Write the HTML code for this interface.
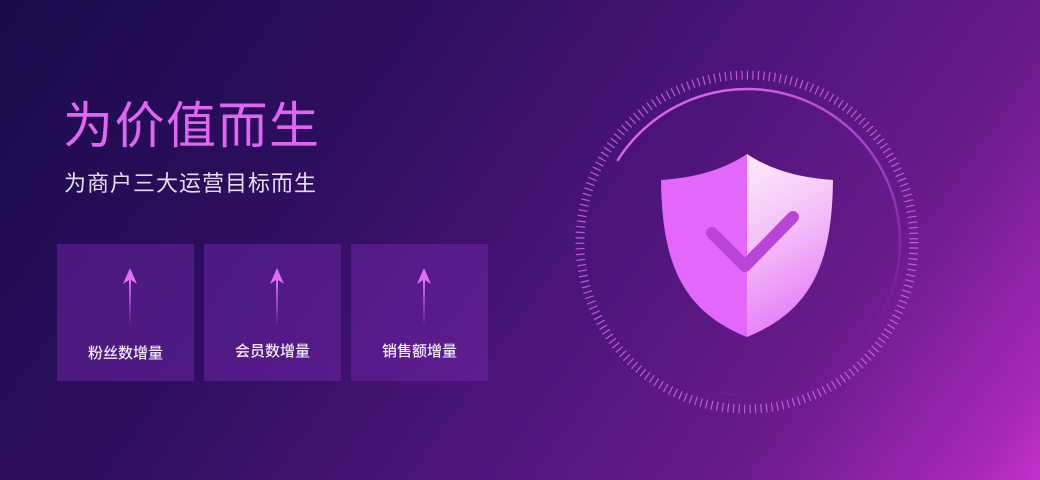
<!DOCTYPE html>
<html><head><meta charset="utf-8"><style>
html,body{margin:0;padding:0}
body{width:1040px;height:480px;overflow:hidden;position:relative;font-family:"Liberation Sans","Noto Sans CJK SC",sans-serif;
background:linear-gradient(125deg,#1c0a4b 0%,#2c0e5e 30%,#4a1478 55%,#6a1b8c 78%,#a728b8 95%,#c52fcb 100%);}
.t{position:absolute;left:63px;top:96px;font-size:50px;color:#e066f2;letter-spacing:1.5px;line-height:60px}
.s{position:absolute;left:64px;top:170px;font-size:22px;color:#e6def0;letter-spacing:1px;line-height:28px}
.b{position:absolute;top:244px;width:137px;height:137px;background:rgba(120,40,175,0.45)}
.b span{position:absolute;left:0;right:0;top:98px;text-align:center;color:#f2ecf6;font-size:15px;font-weight:500}
.b svg{position:absolute;left:65px;top:24px}
</style></head><body>
<div class="t">为价值而生</div>
<div class="s">为商户三大运营目标而生</div>
<div class="b" style="left:57px"><svg width="16" height="60"><path d="M8 0 L15 16 L9 12 L8 58 L7 12 L1 16 Z" fill="#e36cf8"/></svg><span>粉丝数增量</span></div>
<div class="b" style="left:204px"><svg width="16" height="60"><path d="M8 0 L15 16 L9 12 L8 58 L7 12 L1 16 Z" fill="#e36cf8"/></svg><span style="top:96px">会员数增量</span></div>
<div class="b" style="left:351px"><svg width="16" height="60"><path d="M8 0 L15 16 L9 12 L8 58 L7 12 L1 16 Z" fill="#e36cf8"/></svg><span style="top:96px">销售额增量</span></div>
<svg width="1040" height="480" style="position:absolute;left:0;top:0">
<defs>
<linearGradient id="arc" x1="620" y1="150" x2="760" y2="400" gradientUnits="userSpaceOnUse">
<stop offset="0" stop-color="#d762f0"/><stop offset="0.6" stop-color="#b04ad0" stop-opacity="0.6"/><stop offset="1" stop-color="#9a3cc0" stop-opacity="0"/></linearGradient>
<linearGradient id="rh" x1="747" y1="160" x2="830" y2="320" gradientUnits="userSpaceOnUse">
<stop offset="0" stop-color="#fde8fd"/><stop offset="0.45" stop-color="#f4bff8"/><stop offset="1" stop-color="#e572f9"/></linearGradient>
</defs>
<circle cx="747" cy="242" r="167" fill="none" stroke="#d066e8" stroke-opacity="0.85" stroke-width="9" stroke-dasharray="1.2 4.3"/>
<path d="M617.3 160.9 A153 153 0 1 1 720.4 392.7" fill="none" stroke="url(#arc)" stroke-width="2.5"/>
<path d="M747 154 C720 172 690 178 661 180 C662 260 680 310 747 337 Z" fill="#e467fb"/>
<path d="M747 154 C774 172 804 178 833 180 C832 260 814 310 747 337 Z" fill="url(#rh)"/>
<path d="M712 233 L745 266 L793 217" fill="none" stroke="#b944d6" stroke-width="12" stroke-linecap="round" stroke-linejoin="round"/>
</svg>
</body></html>
